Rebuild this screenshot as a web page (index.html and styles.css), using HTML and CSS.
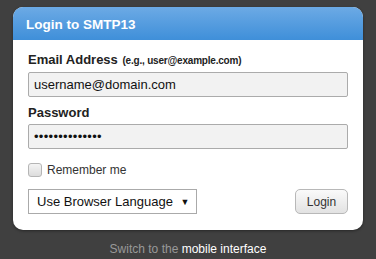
FILE: index.html
```html
<!DOCTYPE html>
<html lang="en">
<head>
    <meta charset="UTF-8">
    <meta name="viewport" content="width=device-width, initial-scale=1.0">
    <title>Login to SMTP13</title>
    <link rel="stylesheet" href="styles.css">
</head>
<body>
    <div class="login-box">
        <div class="login-header">Login to SMTP13</div>
        <form class="login-form">
            <label class="field-label" for="email">Email Address <span class="hint">(e.g., user@example.com)</span></label>
            <input type="text" id="email" class="text-input" value="username@domain.com">
            <label class="field-label" for="password">Password</label>
            <input type="password" id="password" class="text-input" value="aaaaaaaaaaaaaa">
            <label class="remember"><span class="checkbox"></span>Remember me</label>
            <div class="form-bottom">
                <div class="lang-select">Use Browser Language <span class="arrow">&#9660;</span></div>
                <button type="button" class="login-btn">Login</button>
            </div>
        </form>
    </div>
    <p class="switch">Switch to the <a href="#">mobile interface</a></p>
</body>
</html>
```

FILE: styles.css
```css
html, body { margin: 0; padding: 0; }
body { background: #404040; font-family: Arial, "Liberation Sans", sans-serif; padding-top: 7px; }
.login-box { width: 350px; margin: 0 auto; background: #fff; border-radius: 10px; overflow: hidden; box-shadow: 0 1px 3px rgba(0,0,0,0.4); }
.login-header { height: 33px; line-height: 35px; padding-left: 13px; color: #fff; font-weight: bold; font-size: 13.5px; background: linear-gradient(#6caae5, #3f8fd9); }
.login-form { padding: 12px 15px 16px; display: flex; flex-direction: column; }
.field-label { font-size: 13px; font-weight: bold; color: #222; line-height: 16px; margin-bottom: 3px; }
.hint { font-size: 10px; letter-spacing: -0.2px; margin-left: 1px; }
.text-input { box-sizing: border-box; width: 320px; height: 25px; margin: 0 0 8px; padding: 0 5px; border: 1px solid #ababab; border-radius: 2px; background: #f2f2f2; font-family: Arial, "Liberation Sans", sans-serif; font-size: 13px; color: #111; }
#password { margin-bottom: 14px; letter-spacing: 0.3px; }
.remember { display: flex; align-items: center; font-size: 12px; color: #333; height: 14px; }
.checkbox { box-sizing: border-box; width: 14px; height: 14px; border: 1px solid #b5b5b5; border-radius: 3px; background: linear-gradient(#f4f4f4, #dcdcdc); margin-right: 5px; }
.form-bottom { display: flex; justify-content: space-between; margin-top: 12px; }
.lang-select { box-sizing: border-box; width: 169px; height: 25px; line-height: 23px; padding-left: 8px; border: 1px solid #aaa; font-size: 13px; color: #111; background: #fff; white-space: nowrap; }
.arrow { font-size: 9px; margin-left: 4px; vertical-align: 1px; }
.login-btn { box-sizing: border-box; width: 53px; height: 25px; border: 1px solid #b8b8b8; border-radius: 5px; background: linear-gradient(#fafafa, #e2e2e2); font-family: Arial, "Liberation Sans", sans-serif; font-size: 12px; color: #333; padding: 0; }
.switch { margin: 12px 0 0; text-align: center; font-size: 12px; color: #999; }
.switch a { color: #fff; text-decoration: none; }
```
